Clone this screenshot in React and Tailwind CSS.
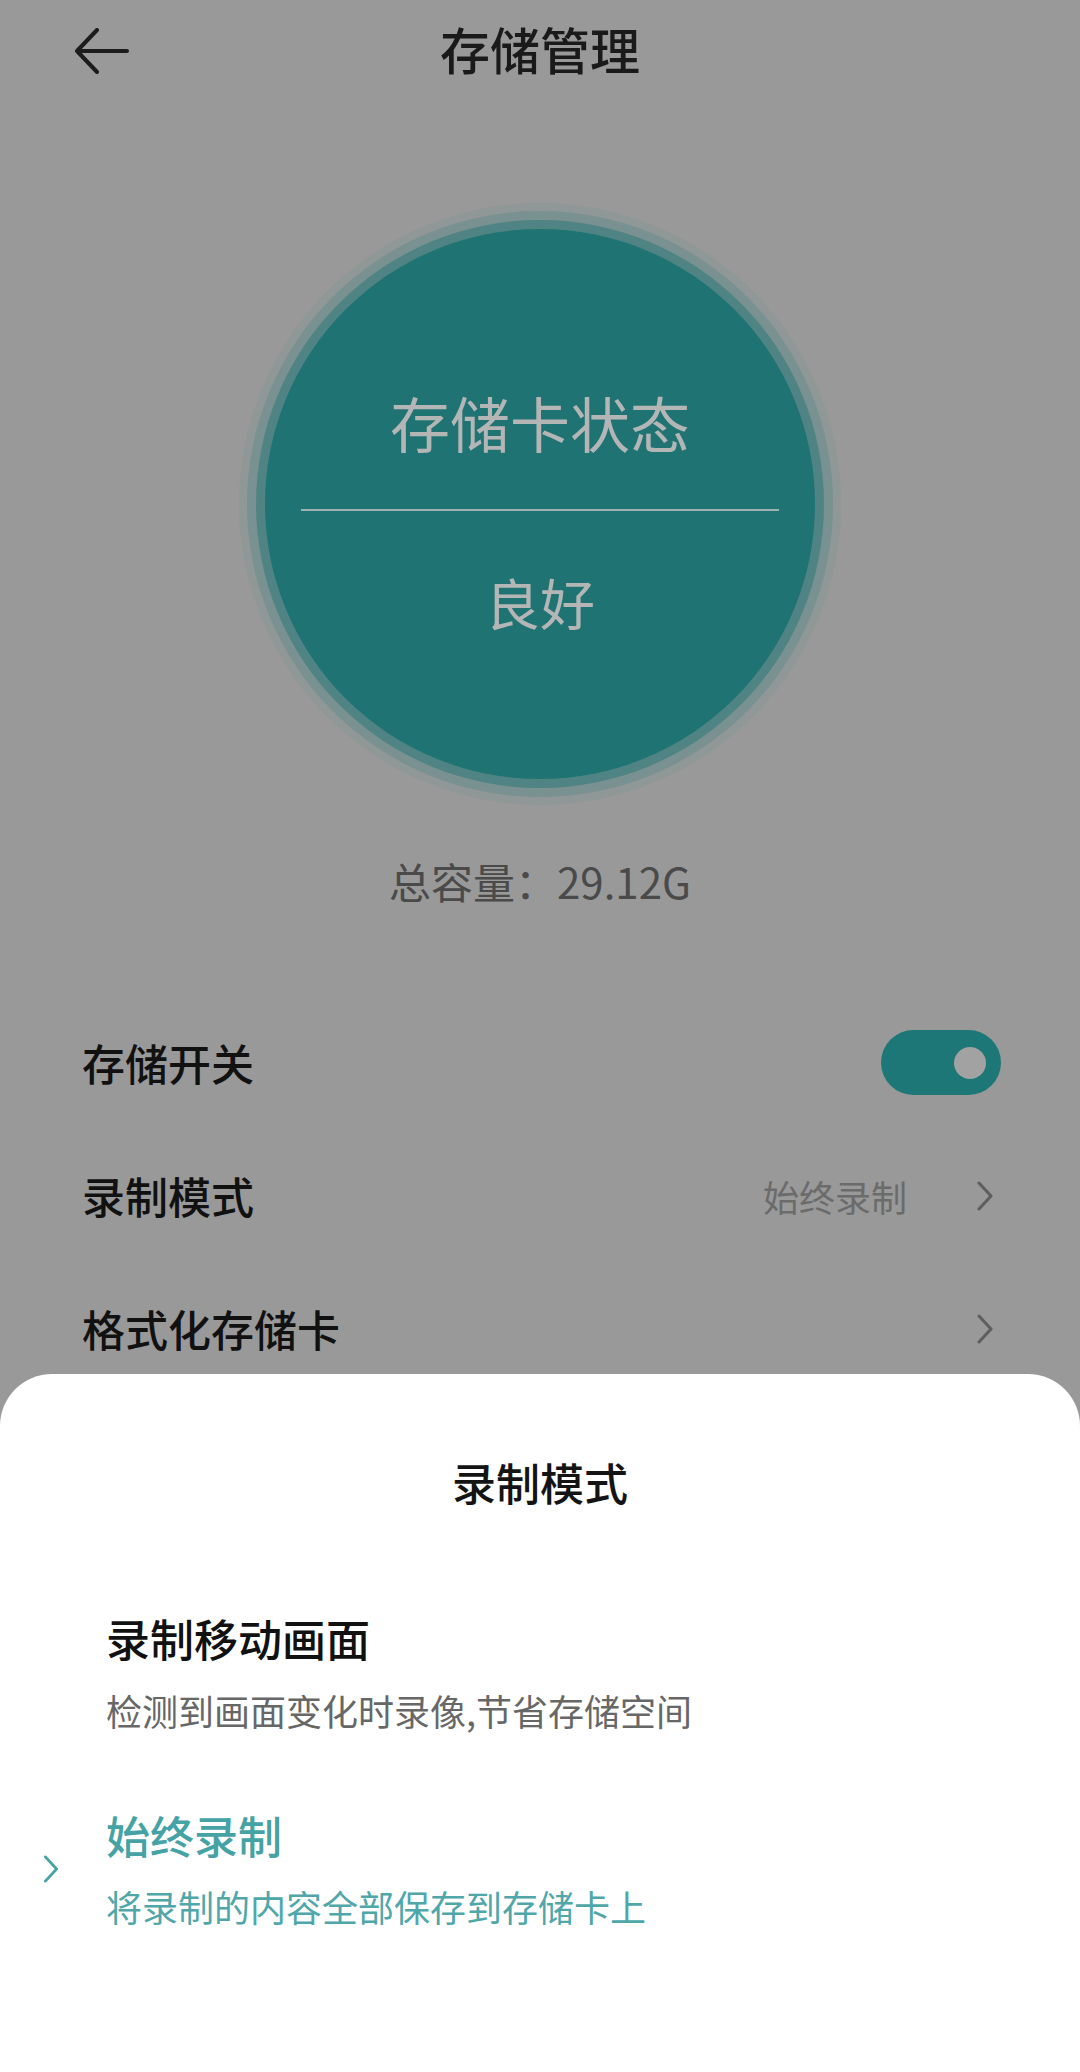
import React from 'react';

const FONT = "font-['Noto_Sans_CJK_SC','Noto_Sans',sans-serif]";

function Chevron({ className }) {
    return (
        <svg viewBox="0 0 16 30" className={className} fill="none" stroke="currentColor" strokeWidth="3" strokeLinecap="round" strokeLinejoin="round">
            <path d="M2 2 L14 15 L2 28" />
        </svg>
    );
}

function Row({ label, children }) {
    return (
        <div className="h-[133px] flex items-center justify-between pl-[82px] pr-[79px]">
            <span className="text-[43px] leading-none font-medium text-[#111111]">{label}</span>
            <div className="flex items-center">{children}</div>
        </div>
    );
}

export default function App() {
    return (
        <div className={`relative w-[1080px] h-[2072px] overflow-hidden bg-[#999999] ${FONT}`}>
            {/* header */}
            <div className="relative h-[96px] flex items-center justify-center">
                <svg viewBox="0 0 56 46" className="absolute left-[74px] top-[28px] w-[56px] h-[46px] text-[#1c1c1c]" fill="none" stroke="currentColor" strokeWidth="4" strokeLinecap="round" strokeLinejoin="round">
                    <path d="M53 23 H3 M23 2 L3 23 L23 44" />
                </svg>
                <h1 className="text-[50px] leading-none font-medium text-[#1a1a1a]">存储管理</h1>
            </div>

            {/* status circle */}
            <div className="mt-[133px] mx-auto w-[550px] h-[550px] rounded-full bg-[#1f7373] shadow-[0_0_0_9px_rgba(40,120,120,0.5),0_0_0_18px_rgba(60,128,128,0.28),0_0_0_26px_rgba(85,138,138,0.12)] flex flex-col items-center">
                <div className="mt-[163px] text-[60px] leading-none text-[#b4b6b6]">存储卡状态</div>
                <div className="mt-[57px] w-[478px] h-[2px] bg-[#9fb2b2]"></div>
                <div className="mt-[63px] text-[55px] leading-none text-[#b4b6b6]">良好</div>
            </div>

            <div className="mt-[81px] text-center text-[42px] leading-none text-[#4a4a4a]">总容量：29.12G</div>

            {/* settings */}
            <div className="mt-[94px]">
                <Row label="存储开关">
                    <div className="w-[120px] h-[65px] rounded-full bg-[#1e7777] flex items-center justify-end pr-[15px]">
                        <div className="w-[32px] h-[32px] rounded-full bg-[#a2a2a2]"></div>
                    </div>
                </Row>
                <Row label="录制模式">
                    <span className="text-[36px] leading-none text-[#6b6b6b]">始终录制</span>
                    <Chevron className="ml-[70px] mr-[8px] w-[16px] h-[30px] text-[#5e5e5e]" />
                </Row>
                <Row label="格式化存储卡">
                    <Chevron className="mr-[8px] w-[16px] h-[30px] text-[#5e5e5e]" />
                </Row>
            </div>

            {/* bottom sheet */}
            <div className="absolute left-0 right-0 bottom-0 h-[698px] bg-white rounded-t-[52px]">
                <div className="pt-[86px] text-center text-[44px] leading-none font-medium text-[#141414]">录制模式</div>

                <div className="mt-[112px] pl-[106px]">
                    <div className="text-[44px] leading-none font-medium text-[#111111]">录制移动画面</div>
                    <div className="mt-[32px] text-[36px] leading-none text-[#676767]">检测到画面变化时录像,节省存储空间</div>
                </div>

                <div className="mt-[85px] flex items-center">
                    <div className="w-[106px] pl-[43px]">
                        <Chevron className="w-[16px] h-[28px] text-[#45a2a5]" />
                    </div>
                    <div>
                        <div className="text-[44px] leading-none font-medium text-[#45a2a5]">始终录制</div>
                        <div className="mt-[31px] text-[36px] leading-none text-[#4fa7aa]">将录制的内容全部保存到存储卡上</div>
                    </div>
                </div>
            </div>
        </div>
    );
}
